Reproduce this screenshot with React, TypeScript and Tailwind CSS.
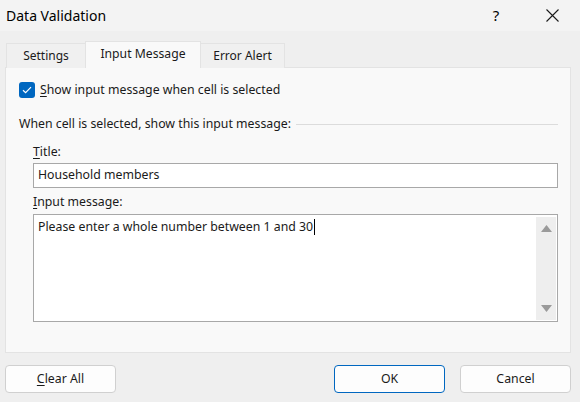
import React from "react";

const font = { fontFamily: '"Noto Sans", "Open Sans", sans-serif' };

function Btn({ children, primary }: { children: React.ReactNode; primary?: boolean }) {
  return (
    <div
      className={`w-[111px] h-[28px] rounded-[4px] bg-[#fdfdfd] flex items-center justify-center text-[12.3px] text-[#1a1a1a] border ${
        primary ? "border-[#0067c0]" : "border-[#d0d0d0]"
      }`}
    >
      {children}
    </div>
  );
}

export default function App() {
  return (
    <div
      className="w-[580px] h-[402px] bg-[#efefef] flex flex-col text-[#1a1a1a] overflow-hidden"
      style={font}
    >
      {/* Title bar */}
      <div className="h-[31px] bg-[#f3f3f3] flex items-center shrink-0">
        <div className="pl-[6px] text-[14px] leading-none flex-1 text-black">Data Validation</div>
        <div className="w-[40px] flex justify-center text-[15px] leading-none text-black mr-[13px]">?</div>
        <div className="w-[46px] flex justify-center mr-[5px]">
          <svg width="13" height="13" viewBox="0 0 13 13">
            <path d="M0.5 0.5 L12.5 12.5 M12.5 0.5 L0.5 12.5" stroke="#1a1a1a" strokeWidth="1.1" fill="none" />
          </svg>
        </div>
      </div>

      {/* Tabs */}
      <div className="flex items-end pl-[6px] mt-[11px] h-[26px] relative z-10 -mb-px">
        <div className="w-[79px] h-[25px] border border-[#e3e3e3] border-b-0 border-r-0 bg-[#f0f0f0] flex items-center justify-center text-[12px]">
          Settings
        </div>
        <div className="w-[116px] h-[27px] border border-[#e3e3e3] border-b-0 bg-[#f9f9f9] flex items-center justify-center text-[12.2px] pb-[2px]">
          Input Message
        </div>
        <div className="w-[84px] h-[25px] border border-[#e3e3e3] border-b-0 border-l-0 bg-[#f0f0f0] flex items-center justify-center text-[12px]">
          Error Alert
        </div>
      </div>

      {/* Panel */}
      <div className="ml-[5px] w-[566px] h-[286px] border border-[#e3e3e3] bg-[#f9f9f9] flex flex-col pl-[13px] pr-[12px] pt-[14px] text-[12.3px]">
        <div className="flex items-center h-[16px]">
          <div className="w-[16px] h-[16px] rounded-[3px] bg-[#0067c0] flex items-center justify-center">
            <svg width="10" height="8" viewBox="0 0 10 8">
              <path d="M1 4.2 L3.6 6.6 L9 1.2" stroke="white" strokeWidth="1.2" fill="none" />
            </svg>
          </div>
          <div className="ml-[5px] leading-[16px]">
            <span className="underline underline-offset-2">S</span>how input message when cell is selected
          </div>
        </div>

        <div className="flex items-center mt-[18px] h-[16px]">
          <div className="leading-[16px] whitespace-nowrap">When cell is selected, show this input message:</div>
          <div className="flex-1 h-px bg-[#dcdcdc] ml-[5px]" />
        </div>

        <div className="pl-[14px] flex flex-col">
          <div className="mt-[12px] leading-[16px] h-[16px]">
            <span className="underline underline-offset-2">T</span>itle:
          </div>
          <div className="mt-[3px] h-[25px] border border-[#a8a8a8] bg-white flex items-center pl-[4px]">
            Household members
          </div>
          <div className="mt-[6px] leading-[16px] h-[16px]">
            <span className="underline underline-offset-2">I</span>nput message:
          </div>
          <div className="mt-[4px] h-[108px] border border-[#a8a8a8] bg-white flex">
            <div className="flex-1 pl-[4px] pt-[4px] leading-[16px] flex items-start">
              <span>Please enter a whole number between 1 and 30</span>
              <span className="w-px h-[16px] bg-black ml-[1px]" />
            </div>
            <div className="w-[20px] mt-[2px] mb-[1px] mr-[1px] bg-[#eeeeee] flex flex-col justify-between items-center py-[8px]">
              <svg width="11" height="7" viewBox="0 0 11 7">
                <path d="M5.5 0 L11 7 L0 7 Z" fill="#9a9a9a" />
              </svg>
              <svg width="11" height="7" viewBox="0 0 11 7">
                <path d="M0 0 L11 0 L5.5 7 Z" fill="#9a9a9a" />
              </svg>
            </div>
          </div>
        </div>
      </div>

      {/* Buttons */}
      <div className="flex items-center mt-[12px] pl-[5px] pr-[9px]">
        <Btn>
          <span className="underline underline-offset-2">C</span>lear All
        </Btn>
        <div className="flex-1" />
        <Btn primary>OK</Btn>
        <div className="w-[15px]" />
        <Btn>Cancel</Btn>
      </div>
    </div>
  );
}
